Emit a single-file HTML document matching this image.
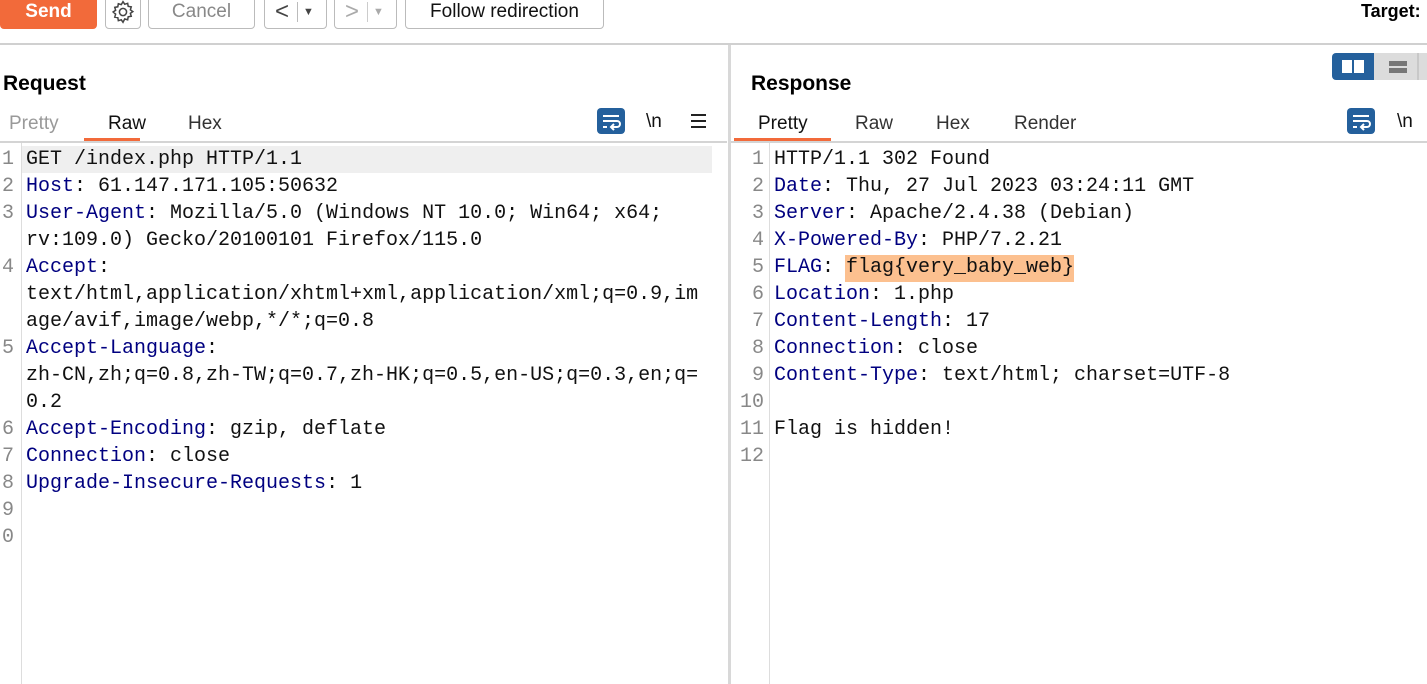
<!DOCTYPE html>
<html><head><meta charset="utf-8"><style>
*{margin:0;padding:0;box-sizing:border-box}
body{width:1427px;height:684px;background:#fff;position:relative;overflow:hidden;font-family:"Liberation Sans","Noto Sans CJK SC",sans-serif}
.a{position:absolute}
.btn{position:absolute;top:-6px;height:35px;border:1px solid #bbb;border-radius:4px;background:#fff;font-size:19px;display:flex;align-items:center;justify-content:center}
.code{position:absolute;font-family:"Liberation Mono","Noto Serif CJK SC",monospace;font-size:20px;line-height:27px;white-space:pre;color:#111}
.k{color:#000080}
.ln{position:absolute;font-family:"Liberation Mono",monospace;font-size:20px;line-height:27px;color:#888;text-align:right;white-space:pre}
.tab{position:absolute;font-size:19px;color:#333}
.wrap{position:absolute;width:28px;height:26px;background:#24609c;border-radius:4px}
</style></head><body>
<div class="btn" style="left:0;width:97px;background:#f26a3a;border-color:#f26a3a;color:#fff;font-weight:bold;">Send</div>
<div class="btn" style="left:105px;width:36px;">
<svg width="26" height="26" viewBox="0 0 24 24" fill="none" stroke="#444" stroke-width="1.4"><circle cx="12" cy="12" r="3.3"/><path d="M12 2.5l1.6 2.3 2.7-.8.5 2.8 2.8.5-.8 2.7 2.3 1.6-2.3 1.6.8 2.7-2.8.5-.5 2.8-2.7-.8L12 21.5l-1.6-2.3-2.7.8-.5-2.8-2.8-.5.8-2.7L2.9 12l2.3-1.6-.8-2.7 2.8-.5.5-2.8 2.7.8z"/></svg></div>
<div class="btn" style="left:148px;width:107px;color:#888;">Cancel</div>
<div class="btn" style="left:264px;width:63px;color:#444;justify-content:flex-start;padding-left:10px;font-size:24px">&lt;<span style="border-left:1px solid #bbb;height:20px;margin-left:8px;padding-left:5px;font-size:11px;line-height:20px">▼</span></div>
<div class="btn" style="left:334px;width:63px;color:#aaa;justify-content:flex-start;padding-left:10px;font-size:24px">&gt;<span style="border-left:1px solid #ccc;height:20px;margin-left:8px;padding-left:5px;font-size:11px;line-height:20px">▼</span></div>
<div class="btn" style="left:405px;width:199px;color:#111;">Follow redirection</div>
<div class="a" style="left:1361px;top:1px;font-size:18px;font-weight:bold;">Target:</div>
<div class="a" style="left:0;top:43px;width:1427px;height:2px;background:#d0d0d0"></div>
<div class="a" style="left:728px;top:45px;width:3px;height:639px;background:#d8d8d8"></div>

<div class="a" style="left:3px;top:72px;font-size:21px;font-weight:bold">Request</div>
<div class="tab" style="left:9px;top:113px;color:#999">Pretty</div>
<div class="tab" style="left:108px;top:113px;color:#111">Raw</div>
<div class="tab" style="left:188px;top:113px">Hex</div>
<div class="a" style="left:84px;top:138px;width:56px;height:3px;background:#f26a3a"></div>
<div class="a" style="left:0;top:141px;width:727px;height:2px;background:#d4d4d4"></div>
<div class="wrap" style="left:597px;top:108px"><svg width="28" height="26" viewBox="0 0 28 26" fill="none" stroke="#fff" stroke-width="2"><path d="M6 8h16M6 13h14a3 3 0 0 1 0 6h-5M17 16l-3 3 3 3M6 19h4"/></svg></div>
<div class="tab" style="left:646px;top:111px;color:#111">\n</div>
<div class="a" style="left:691px;top:114px;width:15px;height:14px;border-top:2px solid #222;border-bottom:2px solid #222"><div style="margin-top:4px;height:2px;background:#222"></div></div>

<div class="a" style="left:22px;top:146px;width:690px;height:27px;background:#efefef"></div>
<div class="a" style="left:21px;top:143px;width:1px;height:541px;background:#ddd"></div>
<div class="ln" style="left:0;top:146px;width:14px">1
2
3

4


5


6
7
8
9
0</div>
<div class="code" style="left:26px;top:146px">GET /index.php HTTP/1.1
<span class="k">Host</span>: 61.147.171.105:50632
<span class="k">User-Agent</span>: Mozilla/5.0 (Windows NT 10.0; Win64; x64;
rv:109.0) Gecko/20100101 Firefox/115.0
<span class="k">Accept</span>:
text/html,application/xhtml+xml,application/xml;q=0.9,im
age/avif,image/webp,*/*;q=0.8
<span class="k">Accept-Language</span>:
zh-CN,zh;q=0.8,zh-TW;q=0.7,zh-HK;q=0.5,en-US;q=0.3,en;q=
0.2
<span class="k">Accept-Encoding</span>: gzip, deflate
<span class="k">Connection</span>: close
<span class="k">Upgrade-Insecure-Requests</span>: 1</div>

<div class="a" style="left:751px;top:72px;font-size:21px;font-weight:bold">Response</div>
<div class="a" style="left:1332px;top:53px;width:42px;height:27px;background:#24609c;border-radius:4px 0 0 4px"><div style="position:absolute;left:10px;top:7px;width:10px;height:13px;background:#fff"></div><div style="position:absolute;left:22px;top:7px;width:10px;height:13px;background:#fff"></div></div>
<div class="a" style="left:1374px;top:53px;width:53px;height:27px;background:#dcdcdc"><div style="position:absolute;left:15px;top:8px;width:18px;height:5px;background:#777"></div><div style="position:absolute;left:15px;top:15px;width:18px;height:5px;background:#777"></div><div style="position:absolute;left:43px;top:0;width:2px;height:27px;background:#c8c8c8"></div></div>
<div class="tab" style="left:758px;top:113px;color:#111">Pretty</div>
<div class="tab" style="left:855px;top:113px">Raw</div>
<div class="tab" style="left:936px;top:113px">Hex</div>
<div class="tab" style="left:1014px;top:113px">Render</div>
<div class="a" style="left:734px;top:138px;width:97px;height:3px;background:#f26a3a"></div>
<div class="a" style="left:731px;top:141px;width:696px;height:2px;background:#d4d4d4"></div>
<div class="wrap" style="left:1347px;top:108px"><svg width="28" height="26" viewBox="0 0 28 26" fill="none" stroke="#fff" stroke-width="2"><path d="M6 8h16M6 13h14a3 3 0 0 1 0 6h-5M17 16l-3 3 3 3M6 19h4"/></svg></div>
<div class="tab" style="left:1397px;top:111px;color:#111">\n</div>

<div class="a" style="left:769px;top:143px;width:1px;height:541px;background:#ddd"></div>
<div class="a" style="left:845px;top:255px;width:229px;height:27px;background:#fcc08f"></div>
<div class="ln" style="left:735px;top:146px;width:29px">1
2
3
4
5
6
7
8
9
10
11
12</div>
<div class="code" style="left:774px;top:146px">HTTP/1.1 302 Found
<span class="k">Date</span>: Thu, 27 Jul 2023 03:24:11 GMT
<span class="k">Server</span>: Apache/2.4.38 (Debian)
<span class="k">X-Powered-By</span>: PHP/7.2.21
<span class="k">FLAG</span>: flag{very_baby_web}
<span class="k">Location</span>: 1.php
<span class="k">Content-Length</span>: 17
<span class="k">Connection</span>: close
<span class="k">Content-Type</span>: text/html; charset=UTF-8

Flag is hidden!
</div>
</body></html>
